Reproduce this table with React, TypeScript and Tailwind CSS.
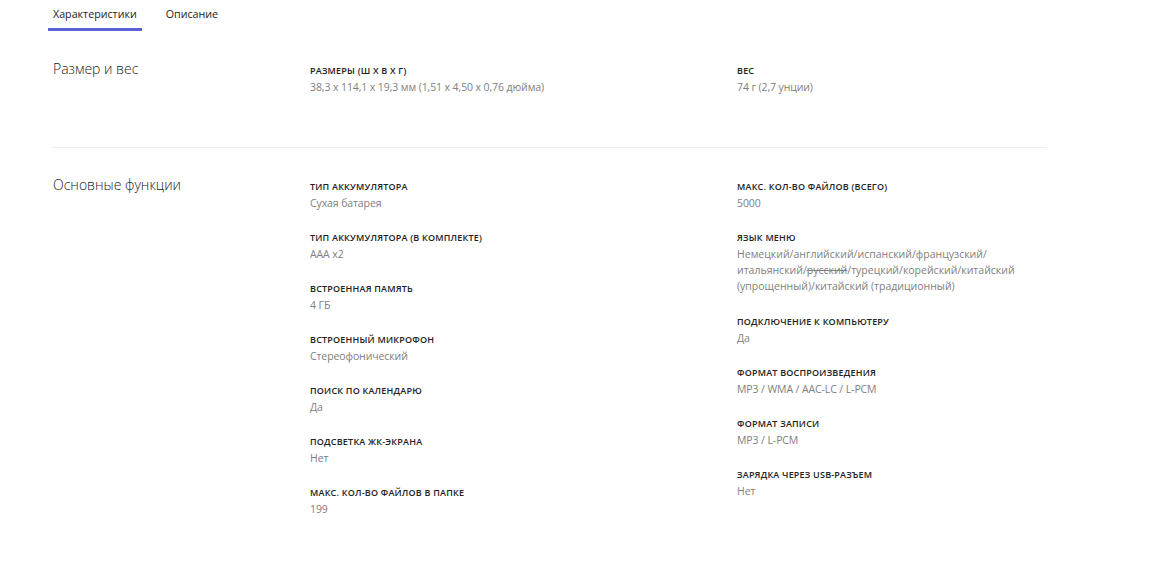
import React from "react";

type Spec = { label: string; value: React.ReactNode; extra?: boolean };

const sizeLeft: Spec[] = [
  { label: "Размеры (Ш x В x Г)", value: "38,3 x 114,1 x 19,3 мм (1,51 x 4,50 x 0,76 дюйма)" },
];
const sizeRight: Spec[] = [{ label: "Вес", value: "74 г (2,7 унции)" }];

const mainLeft: Spec[] = [
  { label: "Тип аккумулятора", value: "Сухая батарея" },
  { label: "Тип аккумулятора (в комплекте)", value: "AAA x2" },
  { label: "Встроенная память", value: "4 ГБ" },
  { label: "Встроенный микрофон", value: "Стереофонический" },
  { label: "Поиск по календарю", value: "Да" },
  { label: "Подсветка ЖК-экрана", value: "Нет" },
  { label: "Макс. кол-во файлов в папке", value: "199" },
];

const mainRight: Spec[] = [
  { label: "Макс. кол-во файлов (всего)", value: "5000" },
  {
    label: "Язык меню",
    extra: true,
    value: (
      <>
        Немецкий/английский/испанский/французский/
        <br />
        итальянский/<span className="line-through">русский</span>/турецкий/корейский/китайский
        <br />
        (упрощенный)/китайский (традиционный)
      </>
    ),
  },
  { label: "Подключение к компьютеру", value: "Да" },
  { label: "Формат воспроизведения", value: "MP3 / WMA / AAC-LC / L-PCM" },
  { label: "Формат записи", value: "MP3 / L-PCM" },
  { label: "Зарядка через USB-разъем", value: "Нет" },
];

function Column({ items }: { items: Spec[] }) {
  return (
    <div className="flex flex-col">
      {items.map((it) => (
        <div key={it.label} className={it.extra ? "mb-[21px]" : "mb-[20px]"}>
          <div className="text-[9px] leading-[14px] font-semibold uppercase tracking-[0.2px] text-[#222]">
            {it.label}
          </div>
          <div
            className={
              "mt-[1px] text-[10.5px] leading-[16px] text-[#808080] " +
              (it.extra ? "tracking-[0px]" : "tracking-[-0.1px]")
            }
          >
            {it.value}
          </div>
        </div>
      ))}
    </div>
  );
}

function Section({
  title,
  left,
  right,
  divider,
}: {
  title: string;
  left: Spec[];
  right: Spec[];
  divider?: boolean;
}) {
  return (
    <div
      className={
        "grid grid-cols-[258px_427px_1fr] pt-[32px] pb-[32px]" +
        (divider ? " border-b border-[#eeeeee]" : "")
      }
    >
      <h2 className="pl-[1px] text-[14px] leading-[14px] font-light text-[#222] -mt-[2px]">{title}</h2>
      <Column items={left} />
      <Column items={right} />
    </div>
  );
}

export default function App() {
  return (
    <div className="bg-white min-h-screen" style={{ fontFamily: '"Open Sans", sans-serif' }}>
      <div className="flex gap-[19px] pl-[48px] h-[32px]">
        <div className="px-[5px] pt-[6px] border-b-[3px] border-[#5c60d8] h-[31px] text-[10.7px] leading-[16px] text-[#222]">
          Характеристики
        </div>
        <div className="px-[5px] pt-[6px] text-[10.7px] leading-[16px] text-[#222]">Описание</div>
      </div>
      <div className="ml-[52px] w-[994px]">
        <Section title="Размер и вес" left={sizeLeft} right={sizeRight} divider />
        <Section title="Основные функции" left={mainLeft} right={mainRight} />
      </div>
    </div>
  );
}
